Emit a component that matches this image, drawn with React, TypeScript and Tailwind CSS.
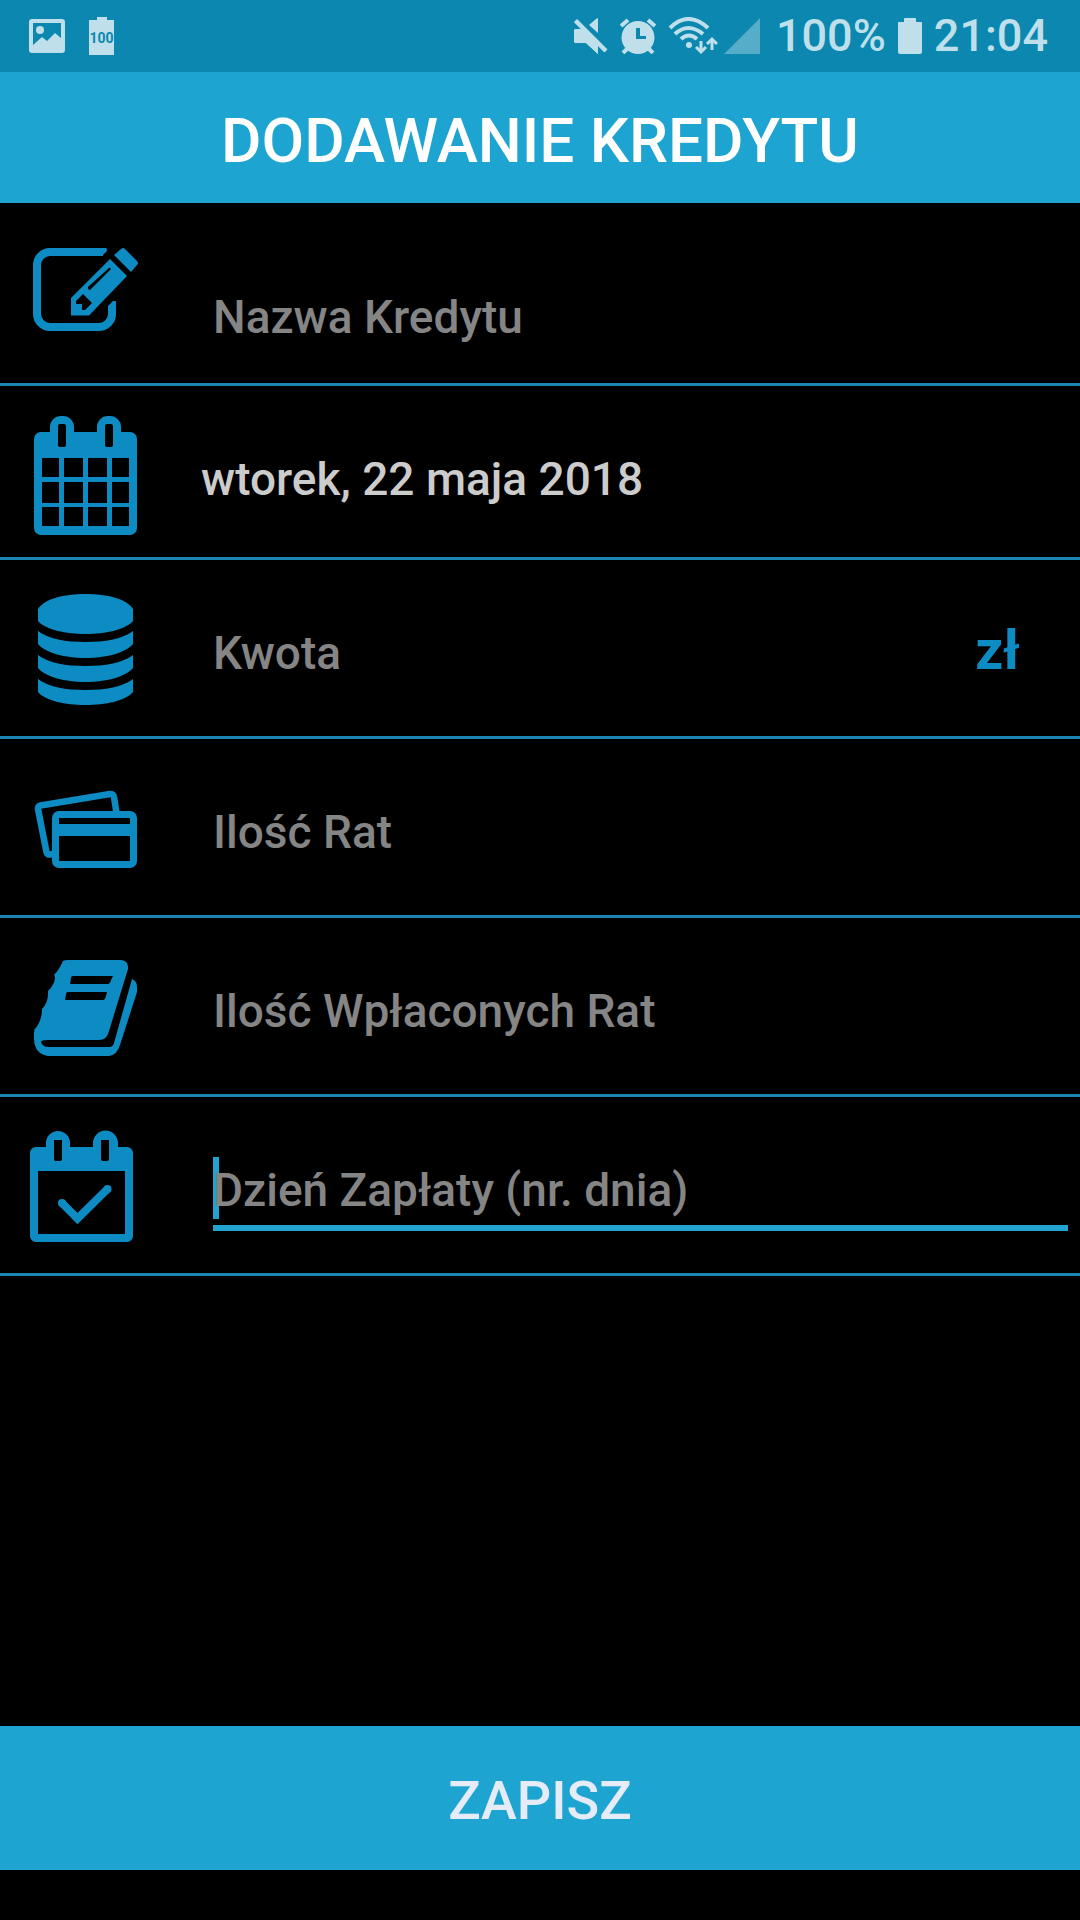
import React, { useState } from "react";

const ICON = "h-[140px] w-[120px] shrink-0 text-[#0c8cc2]";

function EditIcon() {
  return (
    <svg viewBox="0 0 120 140" className={ICON} fill="currentColor" fillRule="evenodd" aria-hidden="true">
      <path
        d="M79 29H26a13 13 0 0 0-13 13v49a13 13 0 0 0 13 13h49a13 13 0 0 0 13-13V83"
        fill="none"
        stroke="currentColor"
        strokeWidth="8"
      />
      <path d="M78 25h4q2 2 0 4l-4 4zM84 84v-1l5-5h3v6z" />
      <path d="M47 75 86 36l17 17-38 39.500H47zM64 66l2 1 21-21-1.500-1.500L64 64zM59 71l9 9-7 7h-3v-6h-6v-3z" />
      <path d="M90 32l7-6q2-2 4 0l12 12q2 2 0 4l-6 7z" />
    </svg>
  );
}

function CalendarIcon() {
  return (
    <svg viewBox="0 0 120 140" className={ICON} fill="currentColor" fillRule="evenodd" aria-hidden="true">
      <path d="M17 30h9v-5a11 11 0 0 1 11-11h2a11 11 0 0 1 11 11v5h23v-5a11 11 0 0 1 11-11h2a11 11 0 0 1 11 11v5h9a7 7 0 0 1 7 7v89a7 7 0 0 1-7 7H17a7 7 0 0 1-7-7V37a7 7 0 0 1 7-7zM36 22q-2 0-2 2v19q0 2 2 2h4q2 0 2-2V24q0-2-2-2zM83 22q-2 0-2 2v19q0 2 2 2h4q2 0 2-2V24q0-2-2-2zM18 56h17v19H18zM40 56h19v19H40zM64 56h19v19H64zM88 56h17v19H88zM18 80h17v21H18zM40 80h19v21H40zM64 80h19v21H64zM88 80h17v21H88zM18 105h17v19H18zM40 105h19v19H40zM64 105h19v19H64zM88 105h17v19H88z" />
    </svg>
  );
}

function CoinsIcon() {
  return (
    <svg viewBox="0 0 120 140" className={ICON} fill="currentColor" aria-hidden="true">
      <path d="M14 31C20 21 40 16 61.500 16S103 21 109 31V43C101 52 81 56 61.500 56S22 52 14 43Z" />
      <path d="M14 53C24 61 42 64 61.500 64S99 61 109 53V66C101 75 82 80 61.500 80S22 75 14 66Z" />
      <path d="M14 77C24 85 42 88 61.500 88S99 85 109 77V90C101 99 82 104 61.500 104S22 99 14 90Z" />
      <path d="M14 101C24 109 42 112 61.500 112S99 109 109 101V114C101 123 82 127 61.500 127S22 123 14 114Z" />
    </svg>
  );
}

function CardsIcon() {
  return (
    <svg viewBox="0 0 120 140" className={ICON} fill="currentColor" fillRule="evenodd" aria-hidden="true">
      <path
        d="M29 97l-3 .5a3 3 0 0 1-3.500-2.500L14 52a3 3 0 0 1 2.500-3.500L86 37a3.500 3.500 0 0 1 4 3L92.500 56"
        fill="none"
        stroke="currentColor"
        strokeWidth="6.500"
      />
      <path d="M35 54h71a7 7 0 0 1 7 7v43a7 7 0 0 1-7 7H35a7 7 0 0 1-7-7V61a7 7 0 0 1 7-7zM35 61v6h71v-6zM35 79v25h71V79z" />
    </svg>
  );
}

function BookIcon() {
  return (
    <svg viewBox="0 0 120 140" className={ICON} fill="currentColor" fillRule="evenodd" aria-hidden="true">
      <path d="M39 25q2-1 5-1h53q8 1 7 9L85 95q-2 9-10 9H24q-7 0-7 2 1 5 8 5h60q4 0 5-4l18-64q5 2 5 8v5L96 109q-3 10-11 11H24Q11 118 10 104v-8q1-1 0-2 7-7 8-19v-2q6-6 6-15v-3q7-7 7-14l-1-2q5-5 9-14zM49 40q-2 0-2 2l-1 6h38q2 0 3-4l2-4zM44 56q-2 0-2 2l-1 6h38q2 0 3-4l1-4z" />
    </svg>
  );
}

function CalendarCheckIcon() {
  return (
    <svg viewBox="0 0 120 140" className={ICON} fill="currentColor" fillRule="evenodd" aria-hidden="true">
      <path d="M12 32h10v-4a12 12 0 0 1 24 0v4h23v-4a12 12 0 0 1 25 0v4h9a6 6 0 0 1 6 6v83a6 6 0 0 1-6 6H12a6 6 0 0 1-6-6V38a6 6 0 0 1 6-6zM30 25v19q0 2 2 2h4q2 0 2-2V25zM77 25v19q0 2 2 2h4q2 0 2-2V25zM14 56v63h87V56z" />
      <path d="M38 88l15.500 15.500L83.500 74" fill="none" stroke="currentColor" strokeWidth="8" />
      <circle cx="38" cy="88" r="4" />
      <circle cx="83.500" cy="74" r="4" />
    </svg>
  );
}

function StatusBar() {
  return (
    <div className="flex h-[72px] items-center justify-between bg-[#0b87b0] pl-[29px] pr-8 text-[#bfe0ea]">
      <div className="flex items-center gap-6">
        <svg viewBox="0 0 36 34" className="h-[34px] w-9" fill="currentColor" fillRule="evenodd" aria-hidden="true">
          <path d="M3 0h30q3 0 3 3v28q0 3-3 3H3q-3 0-3-3V3q0-3 3-3zM4 4v22l9-8 5 4 8-8 6 5V4z" />
          <circle cx="11" cy="11" r="4" />
        </svg>
        <div className="flex h-[38px] w-[25px] flex-col items-center">
          <div className="h-[3px] w-[10px] bg-[#bfe0ea]" />
          <div className="h-[35px] w-[25px] bg-[#bfe0ea] text-center text-[14px] leading-[36px] font-bold text-[#0b87b0]">
            100
          </div>
        </div>
      </div>
      <div className="flex items-center">
        <svg viewBox="0 0 34 36" className="h-9 w-[34px]" fill="currentColor" aria-hidden="true">
          <path d="M0 13q0-2 2-2h10l12 12v13L12 25H2q-2 0-2-2zM24 0v15l-9-8 7-6z" />
          <path d="M1.500 2.500 32 33" stroke="#0b87b0" strokeWidth="9" />
          <path d="M0 13q0-2 2-2h8l14 14v11L12 25H2q-2 0-2-2z" />
          <path d="M1.500 2.500 32 33" stroke="currentColor" strokeWidth="4.500" />
        </svg>
        <svg viewBox="0 0 36 36" className="ml-3 h-9 w-9" fill="currentColor" fillRule="evenodd" aria-hidden="true">
          <path d="M18 3a16.500 16.500 0 1 1 0 33 16.500 16.500 0 0 1 0-33zM16 10v11h10v-3h-6v-8z" />
          <path d="M1 8l7-6M28 2l7 6M7 31l-4 4M29 31l4 4" stroke="currentColor" strokeWidth="4" />
        </svg>
        <svg viewBox="0 0 50 38" className="ml-3 h-[38px] w-[50px]" fill="none" stroke="currentColor" aria-hidden="true">
          <path d="M2 11q18-18 38 0M7 17q13-12 28 0M13 22q8-7 16 0" strokeWidth="4" />
          <circle cx="21" cy="28" r="3" fill="currentColor" stroke="none" />
          <path d="M33 24v11M28 30l5 5 5-5M44 33V22M39 27l5-5 5 5" strokeWidth="3" />
        </svg>
        <svg viewBox="0 0 36 36" className="ml-[6px] h-9 w-9 text-[#55adc9]" fill="currentColor" aria-hidden="true">
          <path d="M36 0v36H0z" />
        </svg>
        <span className="ml-4 text-[45px] leading-[54px] font-medium">100%</span>
        <svg viewBox="0 0 24 36" className="ml-3 h-9 w-6" fill="currentColor" aria-hidden="true">
          <path d="M7 0h10q1 0 1 1v3h5q1 0 1 1v29q0 2-2 2H2q-2 0-2-2V5q0-1 1-1h5V1q0-1 1-1z" />
        </svg>
        <span className="ml-3 text-[45px] leading-[54px] font-medium">21:04</span>
      </div>
    </div>
  );
}

type FieldProps = {
  icon: React.ReactNode;
  name: string;
  placeholder: string;
  numeric?: boolean;
  low?: boolean;
  focused?: boolean;
  suffix?: string;
};

function Field({ icon, name, placeholder, numeric, low, focused, suffix }: FieldProps) {
  const [value, setValue] = useState("");
  return (
    <label
      className={`flex items-center border-b-3 border-[#1b85b4] pl-6 pr-3 ${low ? "h-[183px]" : "h-[179px]"}`}
    >
      {icon}
      <span
        className={`relative ml-[69px] flex min-w-0 flex-1 border-b-6 pt-5 pb-1 ${low ? "mt-[38px]" : ""} ${
          focused ? "border-[#23a3cf]" : "border-transparent"
        }`}
      >
        {focused && <span className="absolute top-[18px] left-0 h-[62px] w-[6px] bg-[#23a3cf]" />}
        <input
          type="text"
          name={name}
          aria-label={placeholder}
          inputMode={numeric ? "numeric" : "text"}
          placeholder={placeholder}
          value={value}
          onChange={(e) => setValue(e.target.value)}
          className="relative h-[62px] w-full min-w-0 bg-transparent text-[46px] font-medium text-[#cccccc] outline-none placeholder:text-[#858585]"
        />
      </span>
      {suffix && <span className="mt-1 mr-12 text-[55px] leading-[62px] font-bold text-[#0c8cc2]">{suffix}</span>}
    </label>
  );
}

export default function App() {
  return (
    <div className="flex min-h-screen flex-col bg-black font-[Roboto,sans-serif]">
      <StatusBar />
      <header className="flex h-[131px] items-center justify-center bg-[#1ea4d0] pt-[6px]">
        <h1 className="text-[62px] leading-[72px] font-medium text-white">DODAWANIE KREDYTU</h1>
      </header>
      <form className="flex flex-1 flex-col" onSubmit={(e) => e.preventDefault()}>
        <Field icon={<EditIcon />} name="name" placeholder="Nazwa Kredytu" low />
        <button
          type="button"
          className="flex h-[174px] items-center border-b-3 border-[#1b85b4] pr-3 pl-6 text-left"
        >
          <CalendarIcon />
          <span className="mt-[14px] ml-[57px] text-[46px] leading-[54px] font-medium text-[#cccccc]">
            wtorek, 22 maja 2018
          </span>
        </button>
        <Field icon={<CoinsIcon />} name="amount" placeholder="Kwota" numeric suffix="zł" />
        <Field icon={<CardsIcon />} name="installments" placeholder="Ilość Rat" numeric />
        <Field icon={<BookIcon />} name="paid" placeholder="Ilość Wpłaconych Rat" numeric />
        <Field icon={<CalendarCheckIcon />} name="day" placeholder="Dzień Zapłaty (nr. dnia)" numeric focused />
        <button
          type="submit"
          className="mt-auto mb-[50px] h-36 bg-[#1ea4d0] pt-1 text-[54px] font-medium text-[#e6ebf8]"
        >
          ZAPISZ
        </button>
      </form>
    </div>
  );
}
